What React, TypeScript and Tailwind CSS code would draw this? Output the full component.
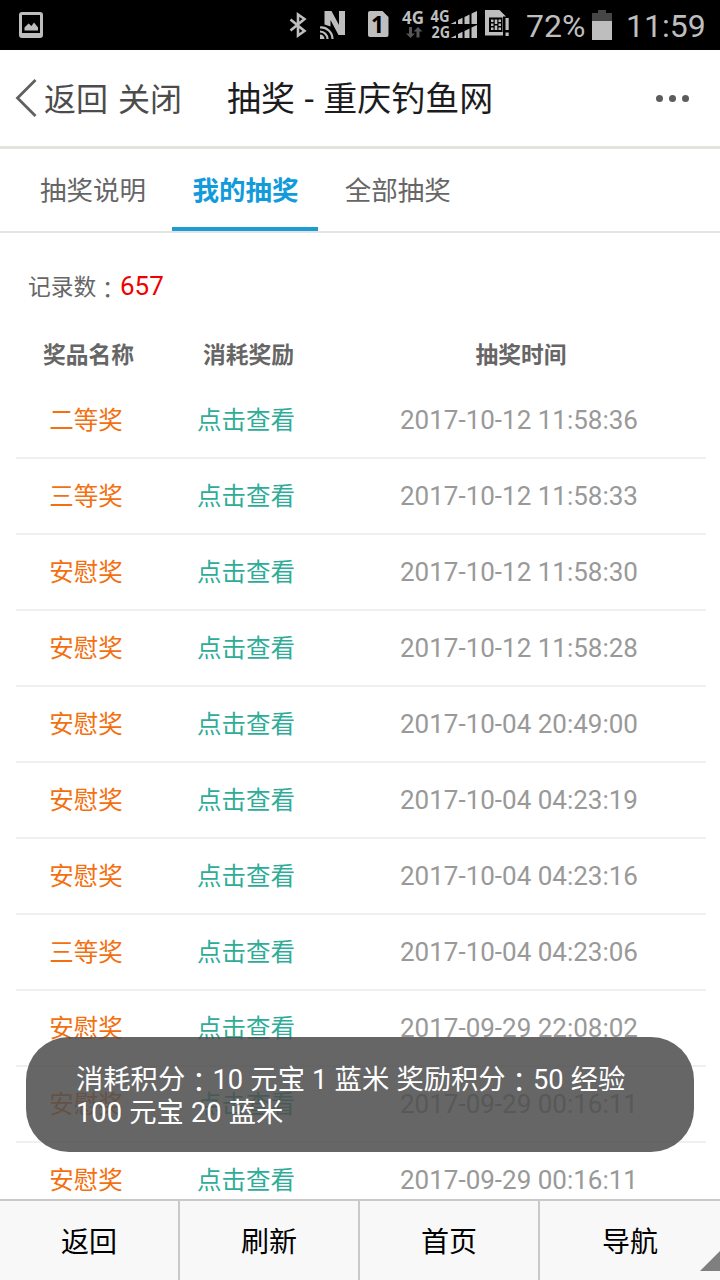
import React from "react";

const records = [
  { name: "二等奖", time: "2017-10-12 11:58:36" },
  { name: "三等奖", time: "2017-10-12 11:58:33" },
  { name: "安慰奖", time: "2017-10-12 11:58:30" },
  { name: "安慰奖", time: "2017-10-12 11:58:28" },
  { name: "安慰奖", time: "2017-10-04 20:49:00" },
  { name: "安慰奖", time: "2017-10-04 04:23:19" },
  { name: "安慰奖", time: "2017-10-04 04:23:16" },
  { name: "三等奖", time: "2017-10-04 04:23:06" },
  { name: "安慰奖", time: "2017-09-29 22:08:02" },
  { name: "安慰奖", time: "2017-09-29 00:16:11" },
  { name: "安慰奖", time: "2017-09-29 00:16:11" },
];

const tabs = ["抽奖说明", "我的抽奖", "全部抽奖"];

// full width colon, centred in its box
function Colon() {
  return <span className="relative top-[3px] font-['Noto_Sans_CJK_TC',sans-serif]">：</span>;
}

function StatusIcons() {
  return (
    <svg width="240" height="50" viewBox="0 0 240 50" fill="#bebebe" className="shrink-0">
      {/* bluetooth */}
      <path d="M10.500 19.500L24.500 31L18 35.500V14.500L24.500 19L10.500 30.500" fill="none" stroke="#bebebe" strokeWidth="2.600" />
      {/* nfc */}
      <path d="M44.500 24.500V11h7l7.500 14V11h6v24h-6.500L50.500 20v6.500z" />
      <path d="M40 34.500a4.500 4.500 0 0 1 4.500 4.500H40z" />
      <path d="M40 31.500a7.500 7.500 0 0 1 7.500 7.500M40 27.500a11.500 11.500 0 0 1 12.500 11.500" fill="none" stroke="#bebebe" strokeWidth="2.200" />
      {/* sim slot */}
      <path d="M90 11h12.500l6 6v18q0 2-2 2H90q-2 0-2-2V13q0-2 2-2z" />
      <text x="91" y="32.500" fontSize="23" fontWeight="700" fill="#000" fontFamily="Noto Sans, sans-serif">1</text>
      {/* network */}
      <g fontFamily="Noto Sans, sans-serif" fontWeight="700">
        <text x="122" y="23.500" fontSize="17" textLength="22" lengthAdjust="spacingAndGlyphs">4G</text>
        <text x="150.500" y="21.500" fontSize="15.500" textLength="19" lengthAdjust="spacingAndGlyphs">4G</text>
        <text x="151.500" y="38" fontSize="15.500" textLength="18.500" lengthAdjust="spacingAndGlyphs">2G</text>
      </g>
      <path d="M129 27v6.500h-3l4.500 4.500 4.500-4.500h-3V27zM136.500 37.500V31.500h-3l4.500-4.500 4.500 4.500h-3v6z" fill="#555" />
      <path d="M170.500 24l5.500-2.700V24zM178 24v-4l4.500-2.200V24zM184.500 24v-7l5-2.500V24zM191.500 24V13.500l5.500-2.600V24z" />
      <path d="M170.500 38l5.500-2.700V38zM178 38v-4l4.500-2.200V38zM184.500 38v-7l5-2.500V38zM191.500 38V27.500l5.500-2.600V38z" />
      {/* sim card warning */}
      <path d="M205 10h14.500l6.500 6.500h-3V35.500h-18z" />
      <path d="M209 17.500h13.500v14.500H209z" fill="#000" />
      <path d="M211 19.500h2.500v2.500H211zM211 23.500h2.500v2.500H211zM211 27.500h2.500v2.500H211zM214.700 19.500h2.600v4.500h-2.600zM214.700 25.500h2.600V30h-2.600zM218.500 19.500h2.500v2.500h-2.500zM218.500 23.500h2.500v2.500h-2.500zM218.500 27.500h2.500v2.500h-2.500z" />
      <path d="M223.500 17h6v20h-6z" fill="#000" />
      <path d="M225.500 18h3.200v12h-3.200zM225.500 32.500h3.200v3.500h-3.200z" />
    </svg>
  );
}

function StatusBar() {
  return (
    <div className="flex h-[50px] items-center bg-black text-[32px] text-[#bebebe]">
      <svg width="24" height="26" viewBox="0 0 24 26" className="ml-[19px] shrink-0">
        <rect x="1.500" y="1.500" width="21" height="23" rx="1.500" fill="none" stroke="#bebebe" strokeWidth="3" />
        <path d="M2 21h20v3H2zM5.500 18.500v-3l4-4 3 2.500 2.500-3.500 4 5v3z" fill="#bebebe" />
      </svg>
      <div className="w-[237px] shrink-0" />
      <StatusIcons />
      <span className="ml-[6px] w-[59px] shrink-0 origin-left pt-[1px] leading-[48px]">72%</span>
      <svg width="20" height="30" viewBox="0 0 20 30" className="ml-[7px] shrink-0">
        <path d="M0 3h6V0h8v3h6v8H0z" fill="#464646" />
        <path d="M0 11h20v19H0z" fill="#bebebe" />
      </svg>
      <span className="ml-[14px] pt-[1px] leading-[48px]">11:59</span>
    </div>
  );
}

function TitleBar() {
  return (
    <header className="flex h-[99px] items-center border-b-[3px] border-[#e3e4e0] text-[32px] text-[#4c4c4c]">
      <svg width="22" height="38" viewBox="0 0 22 38" className="ml-[15px] shrink-0">
        <path d="M20.500 1L2.500 19l18 18" fill="none" stroke="#606060" strokeWidth="2.800" />
      </svg>
      <span className="ml-[7px] w-[183px] shrink-0 pt-[4px] [word-spacing:2px] whitespace-pre">返回 关闭</span>
      <h1 className="flex-1 pt-[2px] text-[34px] [word-spacing:1px] whitespace-pre text-[#1c1c1e]">抽奖 - 重庆钓鱼网</h1>
      <div className="mr-[31px] flex gap-[6px]">
        <i className="size-[7px] rounded-full bg-[#5c5c5c]" />
        <i className="size-[7px] rounded-full bg-[#5c5c5c]" />
        <i className="size-[7px] rounded-full bg-[#5c5c5c]" />
      </div>
    </header>
  );
}

export default function App() {
  return (
    <div className="relative flex h-[1280px] w-[720px] flex-col overflow-hidden bg-white font-[Roboto,'Noto_Sans_CJK_SC',sans-serif]">
      <StatusBar />
      <TitleBar />

      <nav className="flex h-[84px] shrink-0 gap-[6.400px] border-b-2 border-[#e4e4e4] pl-5 text-[26.500px] leading-[83px]">
        {tabs.map((tab, index) => (
          <div
            key={tab}
            className={
              index === 1
                ? "h-[82px] border-b-4 border-[#1e9bd0] px-5 font-bold text-[#129bdb]"
                : "px-5 text-[#666]"
            }
          >
            {tab}
          </div>
        ))}
      </nav>

      <main className="min-h-0 flex-1 overflow-hidden pr-[14px] pl-4">
        <p className="mt-[33px] flex h-10 items-center pl-[12px] text-[22.750px] text-[#666]">
          <span className="pt-[3px]">
            记录数
            <Colon />
          </span>
          <span className="ml-[1px] text-[26px] text-[#f00000]">657</span>
        </p>
        <div className="mt-[30px] flex h-10 items-center text-center text-[22.750px] font-bold text-[#666]">
          <div className="w-[145px]">奖品名称</div>
          <div className="w-[175px]">消耗奖励</div>
          <div className="flex-1">抽奖时间</div>
        </div>
        <div className="mt-[7px]">
          {records.map((item, index) => (
            <div
              key={index}
              className="flex h-[76px] items-center border-b-2 border-[#efefef] text-center text-[24.500px]"
            >
              <div className="w-[140px] pt-[3px] text-[#f37010]">{item.name}</div>
              <div className="w-[180px] pt-[3px] text-[#2eac98]">点击查看</div>
              <div className="flex-1 pr-[4px] text-[26px] text-[#999]">{item.time}</div>
            </div>
          ))}
        </div>
      </main>

      <footer className="flex h-[81px] shrink-0 border-t-2 border-[#c9c9c9] bg-[#f8f8f8] text-center text-[28px] leading-[83px] text-black">
        <div className="w-[180px] border-r-2 border-[#c9c9c9]">返回</div>
        <div className="w-[180px] border-r-2 border-[#c9c9c9]">刷新</div>
        <div className="w-[180px] border-r-2 border-[#c9c9c9]">首页</div>
        <div className="w-[180px]">导航</div>
      </footer>
      <svg width="20" height="20" viewBox="0 0 20 20" className="absolute right-0 bottom-[9px]">
        <path d="M20 0v20H0z" fill="#7f7f7f" />
      </svg>

      <div className="absolute top-[1037px] left-[26px] h-[115px] w-[668px] rounded-[43px] bg-[#4d4d4d]/86 pt-[24px] pl-[50px] text-[27.300px] leading-[33px] [word-spacing:0.4px] whitespace-nowrap text-white">
        <p>
          消耗积分
          <Colon />
          10 元宝 1 蓝米 奖励积分
          <Colon />
          50 经验
        </p>
        <p>100 元宝 20 蓝米</p>
      </div>
    </div>
  );
}
